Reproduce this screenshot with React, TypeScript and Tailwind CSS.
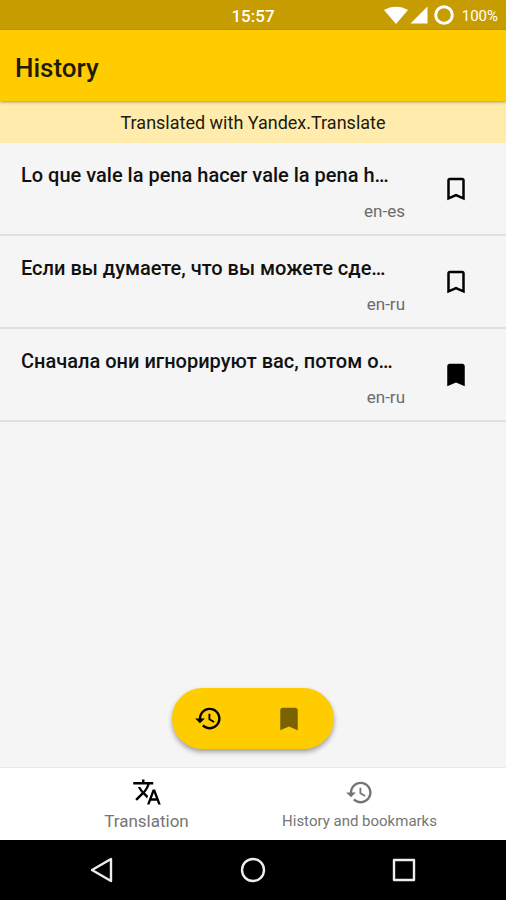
import { useState } from "react";

type Entry = { text: string; pair: string; saved: boolean };

const initialEntries: Entry[] = [
  { text: "Lo que vale la pena hacer vale la pena h…", pair: "en-es", saved: false },
  { text: "Если вы думаете, что вы можете сде…", pair: "en-ru", saved: false },
  { text: "Сначала они игнорируют вас, потом о…", pair: "en-ru", saved: true },
];

function BookmarkIcon({ filled, className }: { filled: boolean; className: string }) {
  return (
    <svg viewBox="0 0 24 24" fill="currentColor" aria-hidden="true" className={className}>
      {filled ? (
        <path d="M17 3H7c-1.100 0-2 .9-2 2v16l7-3 7 3V5c0-1.100-.9-2-2-2z" />
      ) : (
        <path d="M17 3H7c-1.100 0-2 .9-2 2v16l7-3 7 3V5c0-1.100-.9-2-2-2zm0 15l-5-2.180L7 18V5h10v13z" />
      )}
    </svg>
  );
}

function HistoryIcon({ className }: { className: string }) {
  return (
    <svg viewBox="0 0 24 24" fill="currentColor" aria-hidden="true" className={className}>
      <path d="M13 3c-4.970 0-9 4.030-9 9H1l3.890 3.890.07.14L9 12H6c0-3.870 3.130-7 7-7s7 3.130 7 7-3.130 7-7 7c-1.930 0-3.680-.79-4.940-2.060l-1.420 1.420C8.270 19.990 10.510 21 13 21c4.970 0 9-4.030 9-9s-4.030-9-9-9zm-1 5v5l4.280 2.540.72-1.210-3.500-2.080V8H12z" />
    </svg>
  );
}

function TranslateIcon({ className }: { className: string }) {
  return (
    <svg viewBox="0 0 24 24" fill="currentColor" aria-hidden="true" className={className}>
      <path d="M12.870 15.070l-2.540-2.510.03-.03c1.740-1.940 2.980-4.170 3.710-6.530H17V4h-7V2H8v2H1v1.990h11.170C11.500 7.920 10.440 9.750 9 11.350 8.070 10.320 7.300 9.190 6.690 8h-2c.73 1.630 1.730 3.170 2.980 4.560l-5.090 5.020L4 19l5-5 3.110 3.110.76-2.040zM18.500 10h-2L12 22h2l1.120-3h4.750L21 22h2l-4.500-12zm-2.620 7l1.620-4.330L19.120 17h-3.240z" />
    </svg>
  );
}

function StatusBar() {
  return (
    <div className="grid h-[30px] grid-cols-3 items-center bg-[#c79c00] text-white">
      <span className="col-start-2 pt-0.5 text-center text-[17px] leading-6 font-medium">15:57</span>
      <div className="flex items-center justify-end pr-2">
        <svg viewBox="0 0 24 20" fill="currentColor" aria-hidden="true" className="h-5 w-6">
          <path d="M0 5C7 .5 17 .5 24 5L12 19z" />
        </svg>
        <svg viewBox="0 0 18 18" fill="currentColor" aria-hidden="true" className="ml-0.5 size-[18px]">
          <path d="M17.500 .5v17H.5z" />
        </svg>
        <svg viewBox="0 0 20 20" fill="none" stroke="currentColor" strokeWidth="3" aria-hidden="true" className="ml-1.5 size-5">
          <circle cx="10" cy="10" r="8.300" />
        </svg>
        <span className="ml-2 pt-0.5 text-[15px] leading-6">100%</span>
      </div>
    </div>
  );
}

export default function App() {
  const [entries, setEntries] = useState(initialEntries);

  const toggle = (index: number) =>
    setEntries((list) => list.map((e, i) => (i === index ? { ...e, saved: !e.saved } : e)));

  return (
    <div className="flex min-h-screen flex-col bg-[#f5f5f5] font-[Roboto,sans-serif] text-black">
      <StatusBar />
      <header className="relative flex h-[71px] items-center bg-[#ffcc00] px-[15px] pt-1 shadow-[0_1px_3px_rgba(0,0,0,0.4)]">
        <h1 className="text-[26px] leading-8 font-medium text-[#211b05]">History</h1>
      </header>
      <p className="bg-[#ffecac] py-2 pt-2.5 text-center text-[18px] leading-6 text-[#1c1a12]">
        Translated with Yandex.Translate
      </p>

      <main className="flex flex-1 flex-col">
        <ul>
          {entries.map((entry, i) => (
            <li key={entry.pair + i} className="flex h-[93px] items-center border-b-2 border-[#e0e0e0] pl-[21px]">
              <div className="min-w-0 flex-1 pt-2">
                <p className="truncate text-[20px] leading-7 font-medium text-[#111111]">{entry.text}</p>
                <p className="pt-2 text-right text-[17px] leading-7 text-[#6b6b6b]">{entry.pair}</p>
              </div>
              <button
                type="button"
                aria-label="Bookmark"
                aria-pressed={entry.saved}
                onClick={() => toggle(i)}
                className="flex w-[101px] justify-center"
              >
                <BookmarkIcon filled={entry.saved} className="size-[30px]" />
              </button>
            </li>
          ))}
        </ul>
        <div className="mx-auto mt-auto mb-[18px] flex h-[61px] w-[162px] items-center justify-between rounded-full bg-[#ffcc00] pr-[30px] pl-[22px] shadow-[0_3px_5px_rgba(0,0,0,0.35)]">
          <button type="button" aria-label="History">
            <HistoryIcon className="size-[29px]" />
          </button>
          <button type="button" aria-label="Bookmarks" className="text-[#7a6200]">
            <BookmarkIcon filled className="size-[30px]" />
          </button>
        </div>
      </main>

      <nav className="flex h-[73px] border-t border-[#e9e9e9] bg-white px-10 text-[#757575]">
        <button type="button" className="flex flex-1 flex-col items-center justify-end pb-[5px]">
          <TranslateIcon className="size-[30px] text-black" />
          <span className="text-[17px] leading-7">Translation</span>
        </button>
        <button type="button" className="flex flex-1 flex-col items-center justify-end pb-[5px]">
          <HistoryIcon className="size-[29px]" />
          <span className="text-[15px] leading-7 whitespace-nowrap">History and bookmarks</span>
        </button>
      </nav>

      <div className="flex h-[60px] items-center bg-black px-[26px] text-[#eeeeee]">
        <button type="button" aria-label="Back" className="flex flex-1 justify-center">
          <svg viewBox="0 0 26 26" fill="none" stroke="currentColor" strokeWidth="2.400" strokeLinejoin="round" className="size-[26px]">
            <path d="M22 2v22L3 13z" />
          </svg>
        </button>
        <button type="button" aria-label="Home" className="flex flex-1 justify-center">
          <svg viewBox="0 0 26 26" fill="none" stroke="currentColor" strokeWidth="2.400" className="size-[26px]">
            <circle cx="13" cy="13" r="11" />
          </svg>
        </button>
        <button type="button" aria-label="Recent apps" className="flex flex-1 justify-center">
          <svg viewBox="0 0 26 26" fill="none" stroke="currentColor" strokeWidth="2.400" strokeLinejoin="round" className="size-[26px]">
            <rect x="3" y="3" width="20" height="20" />
          </svg>
        </button>
      </div>
    </div>
  );
}
